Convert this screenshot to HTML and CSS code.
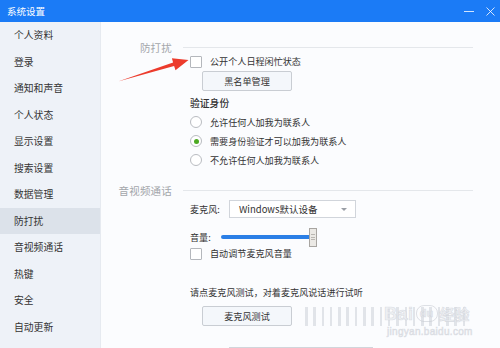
FILE: index.html
```html
<!DOCTYPE html>
<html lang="zh-CN">
<head>
    <meta charset="UTF-8">
    <title>系统设置</title>
    <link rel="stylesheet" href="styles.css">
</head>
<body>
    <div class="window">
        <div class="titlebar">
            <span class="title">系统设置</span>
            <div class="win-btns">
                <span class="win-min"></span>
                <svg class="win-close" width="9" height="9" viewBox="0 0 9 9">
                    <path d="M0.5 0.5 L8.5 8.5 M8.5 0.5 L0.5 8.5" stroke="#fff" stroke-opacity="0.8" stroke-width="1"/>
                </svg>
            </div>
        </div>

        <div class="content">
            <ul class="nav">
                <li>个人资料</li>
                <li>登录</li>
                <li>通知和声音</li>
                <li>个人状态</li>
                <li>显示设置</li>
                <li>搜索设置</li>
                <li>数据管理</li>
                <li class="active">防打扰</li>
                <li>音视频通话</li>
                <li>热键</li>
                <li>安全</li>
                <li>自动更新</li>
            </ul>

            <div class="main">
                <div class="group-head first"><span>防打扰</span></div>
                <div class="group">
                    <div class="check-row"><span class="box"></span>公开个人日程闲忙状态</div>
                    <div class="btn-row"><button class="btn">黑名单管理</button></div>
                    <div class="sub-title">验证身份</div>
                    <div class="radios">
                        <div class="radio-row"><span class="radio"></span>允许任何人加我为联系人</div>
                        <div class="radio-row"><span class="radio checked"></span>需要身份验证才可以加我为联系人</div>
                        <div class="radio-row"><span class="radio"></span>不允许任何人加我为联系人</div>
                    </div>
                </div>

                <div class="group-head second"><span>音视频通话</span></div>
                <div class="group">
                    <div class="field-row">
                        <span class="field-label">麦克风:</span>
                        <div class="select">
                            <span>Windows默认设备</span>
                            <span class="caret"></span>
                        </div>
                    </div>
                    <div class="volume-row">
                        <span class="field-label small">音量:</span>
                        <div class="slider">
                            <div class="track"></div>
                            <div class="thumb"><i></i><i></i><i></i></div>
                        </div>
                    </div>
                    <div class="check-row auto"><span class="box"></span>自动调节麦克风音量</div>
                    <div class="hint">请点麦克风测试，对着麦克风说话进行试听</div>
                    <div class="test-row">
                        <button class="btn">麦克风测试</button>
                        <div class="meter">
                            <i></i><i></i><i></i><i></i><i></i><i></i><i></i><i></i><i></i><i></i>
                            <i></i><i></i><i></i><i></i><i></i><i></i><i></i><i></i><i></i><i></i>
                        </div>
                    </div>
                    <div class="select next"></div>
                </div>
            </div>
        </div>

        <svg class="arrow" width="500" height="348" viewBox="0 0 500 348">
            <polygon points="118,81.5 173.1,62.6 171.9,58.2 188.5,60 175.5,70.3 174.1,66" fill="#ec3b2c"/>
        </svg>

        <div class="watermark">
            <div class="wm-logo"><span class="wm-bai">Bai</span><span class="wm-du">du</span><span class="wm-jy">经验</span></div>
            <div class="wm-url">jingyan.baidu.com</div>
        </div>
    </div>
</body>
</html>
```

FILE: styles.css
```css
body {
    margin: 0;
    padding: 0;
    width: 500px;
    height: 348px;
    overflow: hidden;
    font-family: "Noto Sans CJK SC", "Noto Sans", sans-serif;
    color: #333;
}

.window {
    position: relative;
    width: 500px;
    height: 348px;
    display: flex;
    flex-direction: column;
    background: #fbfcfe;
}

.titlebar {
    height: 22px;
    flex: none;
    background: #1b7bf6;
    display: flex;
    align-items: center;
    justify-content: space-between;
    padding: 0 5px 0 7px;
}

.title {
    color: #fff;
    font-size: 9.5px;
    line-height: 22px;
}

.win-btns {
    display: flex;
    align-items: center;
    gap: 12px;
}

.win-min {
    width: 10px;
    height: 1px;
    background: rgba(255, 255, 255, 0.8);
    margin-top: 1px;
}

.win-close {
    display: block;
}

.content {
    flex: 1;
    display: flex;
    min-height: 0;
}

.nav {
    list-style: none;
    margin: 0;
    padding: 0;
    width: 100px;
    flex: none;
    background: #eef2f8;
    border-right: 1px solid #e6eaf0;
}

.nav li {
    height: 26.5px;
    line-height: 26.5px;
    padding-left: 14px;
    font-size: 9.8px;
    color: #333;
}

.nav li.active {
    background: #dce2ea;
}

.main {
    flex: 1;
    padding-right: 27px;
    display: flex;
    flex-direction: column;
}

.group-head {
    display: flex;
    align-items: center;
    height: 15px;
}

.group-head.first {
    margin-top: 18px;
}

.group-head.second {
    margin-top: 13.5px;
}

.group-head span {
    width: 71px;
    text-align: right;
    font-size: 10.5px;
    color: #a3a6ab;
    letter-spacing: 0.2px;
}

.group-head::after {
    content: "";
    flex: 1;
    height: 1px;
    margin-left: 11px;
    background: #e4e7eb;
}

.group {
    padding-left: 89px;
    display: flex;
    flex-direction: column;
    align-items: flex-start;
    font-size: 9.1px;
}

.check-row {
    height: 13px;
    display: flex;
    align-items: center;
    line-height: 13px;
}

.box {
    width: 10px;
    height: 10px;
    border: 1px solid #b4b7bc;
    border-radius: 1px;
    background: #fff;
    margin-right: 8px;
}

.btn-row {
    margin-top: 3px;
    padding-left: 12px;
}

.btn {
    width: 90px;
    height: 20px;
    padding: 0;
    border: 1px solid #c9cdd3;
    border-radius: 2px;
    background: #f4f7fb;
    font-family: inherit;
    font-size: 9.1px;
    color: #333;
}

.sub-title {
    margin-top: 5px;
    height: 14px;
    line-height: 14px;
    font-size: 9.8px;
    font-weight: 500;
}

.radios {
    margin-top: 2.5px;
}

.radio-row {
    height: 19px;
    display: flex;
    align-items: center;
}

.radio {
    width: 10px;
    height: 10px;
    border: 1px solid #b9bcc1;
    border-radius: 50%;
    background: #fff;
    margin-right: 8px;
    display: flex;
    align-items: center;
    justify-content: center;
}

.radio.checked::after {
    content: "";
    width: 5px;
    height: 5px;
    border-radius: 50%;
    background: #4caa22;
}

.field-row {
    margin-top: 2px;
    height: 18px;
    display: flex;
    align-items: center;
}

.field-label {
    width: 39px;
    font-size: 9.1px;
}

.field-label.small {
    width: 31px;
}

.select {
    width: 125px;
    height: 16px;
    border: 1px solid #d1d5db;
    background: #fff;
    display: flex;
    align-items: center;
    justify-content: space-between;
    padding: 0 8px 0 9px;
    box-sizing: content-box;
    font-size: 9.5px;
}

.field-row .select {
    width: 108px;
}

.caret {
    width: 0;
    height: 0;
    border-left: 3.5px solid transparent;
    border-right: 3.5px solid transparent;
    border-top: 3.5px solid #9a9ea5;
}

.volume-row {
    margin-top: 9.5px;
    height: 19px;
    display: flex;
    align-items: center;
}

.slider {
    position: relative;
    width: 97px;
    height: 19px;
    display: flex;
    align-items: center;
}

.track {
    width: 92px;
    height: 4px;
    border-radius: 2px;
    background: #2b7fe6;
}

.thumb {
    position: absolute;
    left: 88px;
    top: 0;
    width: 6px;
    height: 17px;
    border: 1px solid #a8a5a1;
    background: #ebe9e5;
    display: flex;
    flex-direction: column;
    align-items: center;
    justify-content: center;
    gap: 1.5px;
}

.thumb i {
    width: 4px;
    height: 1px;
    background: #b9b6b1;
}

.check-row.auto {
    margin-top: 0.5px;
}

.hint {
    margin-top: 25px;
    height: 14px;
    line-height: 14px;
}

.test-row {
    margin-top: 7px;
    padding-left: 12px;
    display: flex;
    align-items: center;
    gap: 13px;
}

.meter {
    display: flex;
    gap: 5.8px;
    height: 19px;
}

.meter i {
    width: 2.5px;
    height: 19px;
    background: #e1e4e9;
}

.select.next {
    margin-top: 21px;
    margin-left: 39px;
    height: 16px;
}

.arrow {
    position: absolute;
    left: 0;
    top: 0;
    pointer-events: none;
}

.watermark {
    position: absolute;
    left: 384px;
    top: 303px;
    pointer-events: none;
    color: rgba(236, 238, 242, 0.85);
    -webkit-text-stroke: 0.6px rgba(196, 200, 208, 0.55);
}

.wm-logo {
    display: flex;
    align-items: flex-end;
    height: 21px;
}

.wm-bai {
    font-family: "Liberation Sans", sans-serif;
    font-weight: bold;
    font-size: 18px;
    line-height: 20px;
    letter-spacing: 0.5px;
}

.wm-du {
    width: 20px;
    height: 15px;
    margin: 0 2px 2px;
    border-radius: 8px;
    border: 1px solid rgba(196, 200, 208, 0.55);
    font-family: "Liberation Sans", sans-serif;
    font-weight: bold;
    font-size: 11px;
    line-height: 15px;
    text-align: center;
}

.wm-jy {
    font-size: 15px;
    line-height: 20px;
    font-weight: bold;
}

.wm-url {
    font-family: "Liberation Sans", sans-serif;
    font-size: 10px;
    line-height: 12px;
    margin-top: 2px;
    padding-left: 3px;
    letter-spacing: 0.3px;
}
```
